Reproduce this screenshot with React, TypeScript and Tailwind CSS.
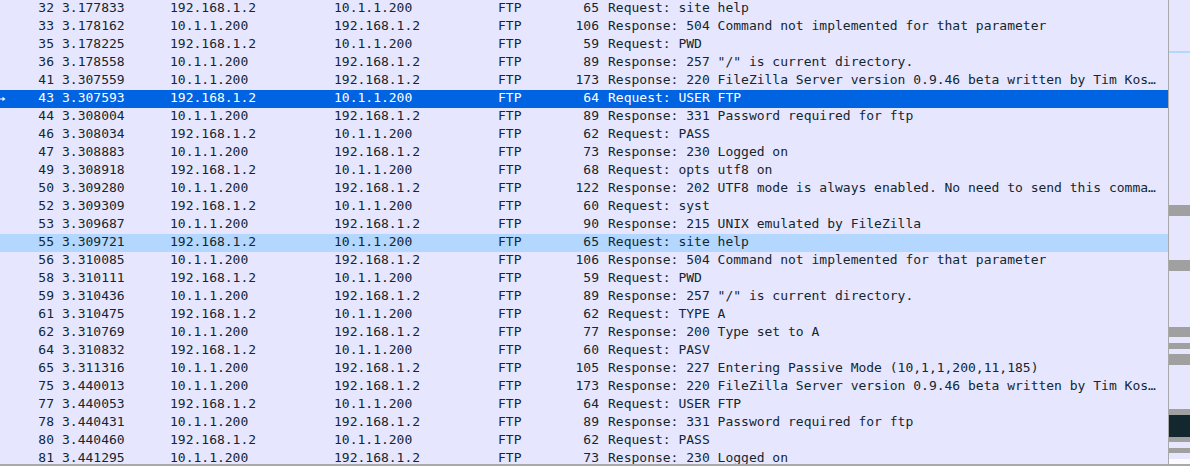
import React from "react";

type Row = [number, string, string, string, string, number, string];

const rows: Row[] = [
  [32, "3.177833", "192.168.1.2", "10.1.1.200", "FTP", 65, "Request: site help"],
  [33, "3.178162", "10.1.1.200", "192.168.1.2", "FTP", 106, "Response: 504 Command not implemented for that parameter"],
  [35, "3.178225", "192.168.1.2", "10.1.1.200", "FTP", 59, "Request: PWD"],
  [36, "3.178558", "10.1.1.200", "192.168.1.2", "FTP", 89, 'Response: 257 "/" is current directory.'],
  [41, "3.307559", "10.1.1.200", "192.168.1.2", "FTP", 173, "Response: 220 FileZilla Server version 0.9.46 beta written by Tim Kos\u2026"],
  [43, "3.307593", "192.168.1.2", "10.1.1.200", "FTP", 64, "Request: USER FTP"],
  [44, "3.308004", "10.1.1.200", "192.168.1.2", "FTP", 89, "Response: 331 Password required for ftp"],
  [46, "3.308034", "192.168.1.2", "10.1.1.200", "FTP", 62, "Request: PASS"],
  [47, "3.308883", "10.1.1.200", "192.168.1.2", "FTP", 73, "Response: 230 Logged on"],
  [49, "3.308918", "192.168.1.2", "10.1.1.200", "FTP", 68, "Request: opts utf8 on"],
  [50, "3.309280", "10.1.1.200", "192.168.1.2", "FTP", 122, "Response: 202 UTF8 mode is always enabled. No need to send this comma\u2026"],
  [52, "3.309309", "192.168.1.2", "10.1.1.200", "FTP", 60, "Request: syst"],
  [53, "3.309687", "10.1.1.200", "192.168.1.2", "FTP", 90, "Response: 215 UNIX emulated by FileZilla"],
  [55, "3.309721", "192.168.1.2", "10.1.1.200", "FTP", 65, "Request: site help"],
  [56, "3.310085", "10.1.1.200", "192.168.1.2", "FTP", 106, "Response: 504 Command not implemented for that parameter"],
  [58, "3.310111", "192.168.1.2", "10.1.1.200", "FTP", 59, "Request: PWD"],
  [59, "3.310436", "10.1.1.200", "192.168.1.2", "FTP", 89, 'Response: 257 "/" is current directory.'],
  [61, "3.310475", "192.168.1.2", "10.1.1.200", "FTP", 62, "Request: TYPE A"],
  [62, "3.310769", "10.1.1.200", "192.168.1.2", "FTP", 77, "Response: 200 Type set to A"],
  [64, "3.310832", "192.168.1.2", "10.1.1.200", "FTP", 60, "Request: PASV"],
  [65, "3.311316", "10.1.1.200", "192.168.1.2", "FTP", 105, "Response: 227 Entering Passive Mode (10,1,1,200,11,185)"],
  [75, "3.440013", "10.1.1.200", "192.168.1.2", "FTP", 173, "Response: 220 FileZilla Server version 0.9.46 beta written by Tim Kos\u2026"],
  [77, "3.440053", "192.168.1.2", "10.1.1.200", "FTP", 64, "Request: USER FTP"],
  [78, "3.440431", "10.1.1.200", "192.168.1.2", "FTP", 89, "Response: 331 Password required for ftp"],
  [80, "3.440460", "192.168.1.2", "10.1.1.200", "FTP", 62, "Request: PASS"],
  [81, "3.441295", "10.1.1.200", "192.168.1.2", "FTP", 73, "Response: 230 Logged on"],
];

function Minimap() {
  const gray: [number, number][] = [
    [205, 216],
    [260, 271],
    [327, 337],
    [343, 349],
    [354, 365],
    [409, 415],
    [437, 442],
    [448, 453],
  ];
  return (
    <svg width="21" height="464" viewBox="0 0 21 464" className="block">
      <rect x="0" y="0" width="21" height="464" fill="#e7e6ff" />
      <rect x="0" y="51" width="21" height="2" fill="#b3d7ff" />
      {gray.map(([a, b]) => (
        <rect key={a} x="0" y={a} width="21" height={b - a} fill="#a0a0a0" />
      ))}
      <rect x="0" y="415" width="21" height="22" fill="#12272e" />
      <rect x="0" y="459" width="21" height="5" fill="#fbfbff" />
    </svg>
  );
}

export default function App() {
  return (
    <div
      className="w-[1190px] h-[466px] overflow-hidden bg-[#e7e6ff] border-b-2 border-[#a9a9a9] flex"
      style={{ fontFamily: '"DejaVu Sans Mono", "Liberation Mono", monospace' }}
    >
      <div className="w-[1168px] h-[464px] overflow-hidden flex flex-col text-[13px] leading-[15px]">
        {rows.map((r) => {
          const selected = r[0] === 43;
          const related = r[0] === 55;
          const rowCls = selected
            ? "bg-[#0063e1] text-white"
            : related
            ? "bg-[#b3d7ff] text-[#12272e]"
            : "text-[#12272e]";
          return (
            <div
              key={r[0]}
              className={`relative flex shrink-0 h-[18px] items-start whitespace-nowrap ${rowCls}`}
            >
              {selected && (
                <svg
                  width="6"
                  height="6"
                  viewBox="0 0 6 6"
                  className="absolute left-0 top-[6px]"
                >
                  <path d="M0 3 H3" stroke="#ffffff" strokeWidth="1" />
                  <path d="M2.5 0.8 L5.5 3 L2.5 5.2 Z" fill="#ffffff" />
                </svg>
              )}
              <div className="w-[54px] text-right shrink-0">{r[0]}</div>
              <div className="w-[116px] pl-[8px] shrink-0">{r[1]}</div>
              <div className="w-[164px] shrink-0">{r[2]}</div>
              <div className="w-[164px] shrink-0">{r[3]}</div>
              <div className="w-[53px] shrink-0">{r[4]}</div>
              <div className="w-[48px] text-right shrink-0">{r[5]}</div>
              <div className="pl-[9px] shrink-0">{r[6]}</div>
            </div>
          );
        })}
      </div>
      <div className="w-px h-[464px] bg-[#a9a9a9] shrink-0" />
      <div className="w-[21px] h-[464px] shrink-0">
        <Minimap />
      </div>
    </div>
  );
}
